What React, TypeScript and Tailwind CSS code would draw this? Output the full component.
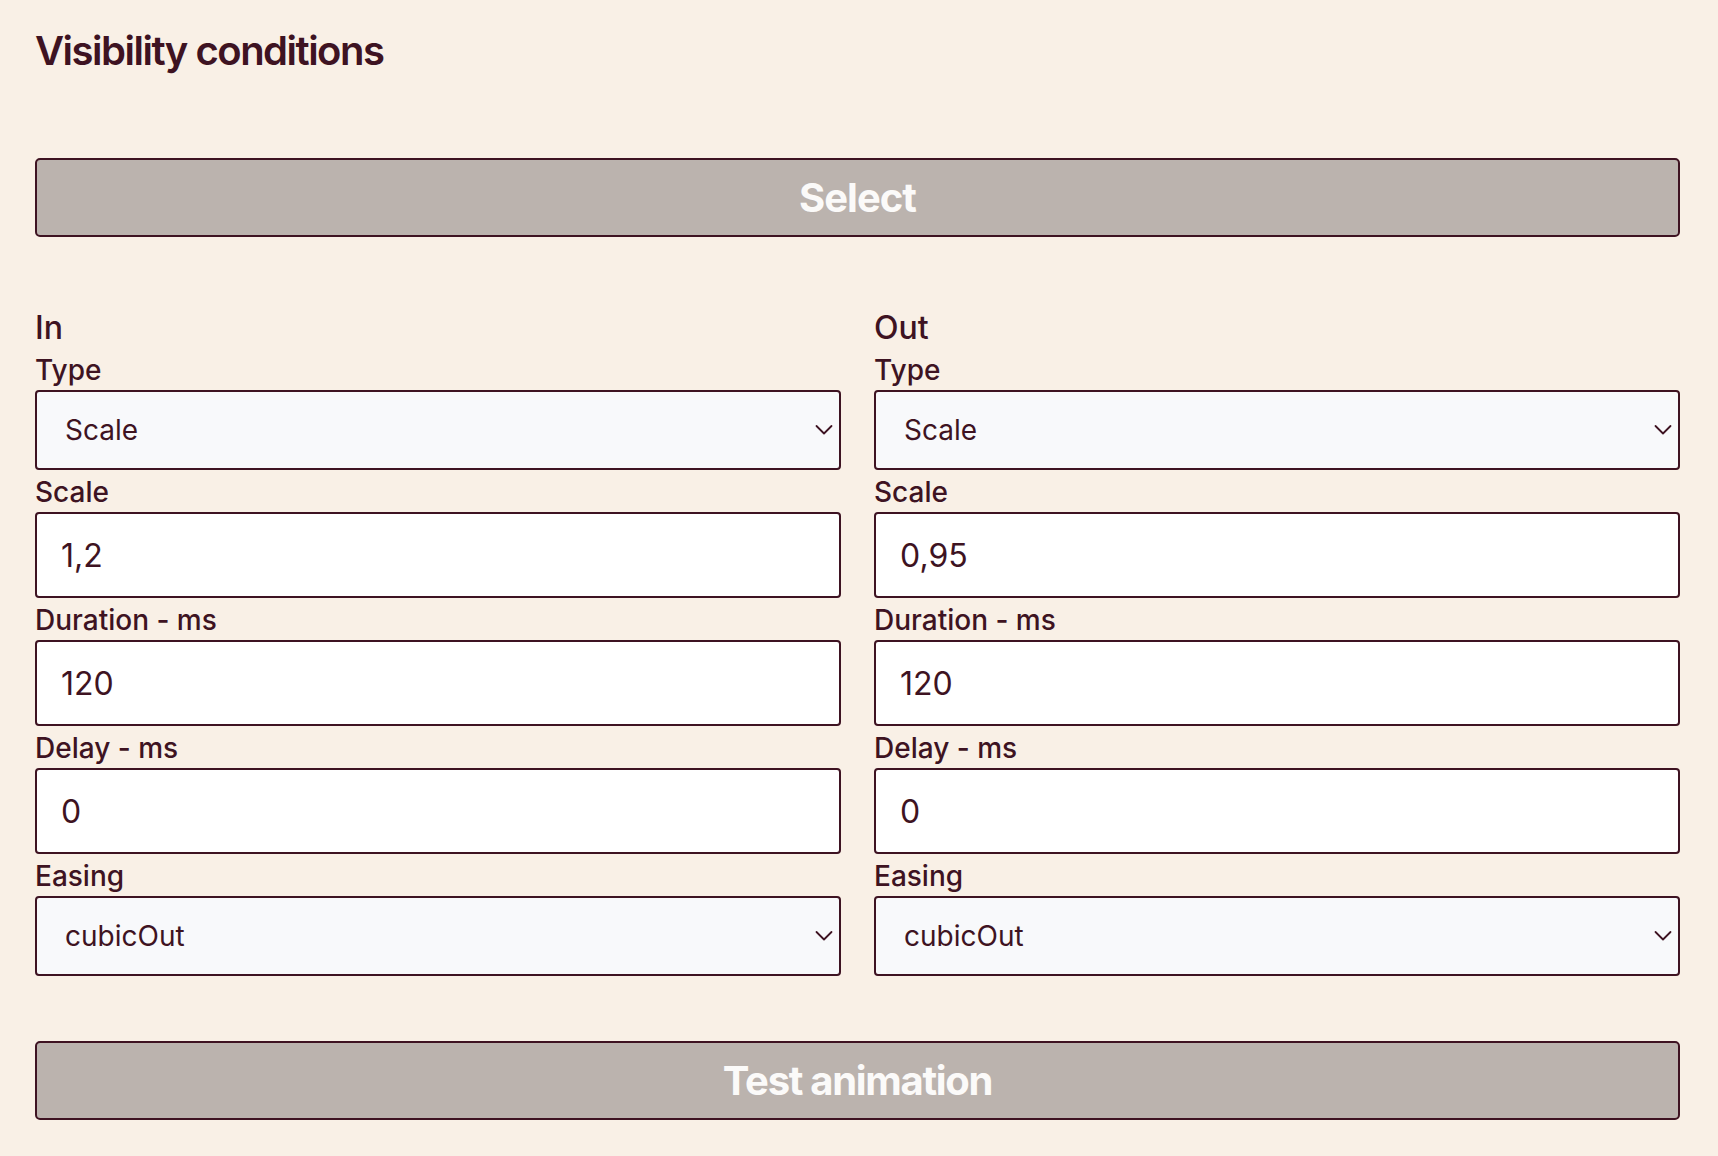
import React from "react";

const font = { fontFamily: "Inter, 'Noto Sans', sans-serif" };

function Chevron() {
  return (
    <svg
      className="pointer-events-none absolute right-[8px] top-1/2 -translate-y-1/2"
      width="18"
      height="11"
      viewBox="0 0 18 11"
      fill="none"
    >
      <path d="M1.5 1.5 L9 9 L16.5 1.5" stroke="#3e1322" strokeWidth="1.8" strokeLinecap="round" strokeLinejoin="round" />
    </svg>
  );
}

function Label({ children }: { children: React.ReactNode }) {
  return <div className="h-[42px] pt-[3px] text-[28px] leading-[39px] font-medium text-[#3e1322]">{children}</div>;
}

function SelectBox({ value }: { value: string }) {
  return (
    <div className="relative h-[80px] w-full">
      <select
        value={value}
        onChange={() => {}}
        className="h-full w-full appearance-none rounded-[4px] border-2 border-[#3e1322] bg-[#f8f9fb] pl-[28px] text-[28px] text-[#3e1322] outline-none"
        style={font}
      >
        <option value={value}>{value}</option>
      </select>
      <Chevron />
    </div>
  );
}

function TextBox({ value }: { value: string }) {
  return (
    <input
      value={value}
      readOnly
      className="block h-[86px] w-full rounded-[4px] border-2 border-[#3e1322] bg-white pl-[24px] text-[32px] text-[#3e1322] outline-none"
      style={font}
    />
  );
}

function Column({ title, scale }: { title: string; scale: string }) {
  return (
    <div className="flex flex-col">
      <div className="text-[32px] leading-[40px] font-medium text-[#3e1322]">{title}</div>
      <Label>Type</Label>
      <SelectBox value="Scale" />
      <Label>Scale</Label>
      <TextBox value={scale} />
      <Label>Duration - ms</Label>
      <TextBox value="120" />
      <Label>Delay - ms</Label>
      <TextBox value="0" />
      <Label>Easing</Label>
      <SelectBox value="cubicOut" />
    </div>
  );
}

export default function App() {
  return (
    <div className="min-h-screen w-full bg-[#f9f0e6] pl-[35px] pr-[38px] pt-[27px] pb-[37px]" style={font}>
      <h2 className="text-[40px] leading-[48px] font-semibold tracking-[-1.5px] text-[#3e1322]">Visibility conditions</h2>
      <button className="mt-[83px] block h-[79px] w-full rounded-[5px] border-2 border-[#3e1322] bg-[#bbb3ae] text-[40px] font-bold tracking-[-1px] text-[#fbfaf9]">
        Select
      </button>
      <div className="mt-[71px] grid grid-cols-2 gap-x-[33px]">
        <Column title="In" scale="1,2" />
        <Column title="Out" scale="0,95" />
      </div>
      <button className="mt-[65px] block h-[79px] w-full rounded-[5px] border-2 border-[#3e1322] bg-[#bbb3ae] text-[40px] font-bold tracking-[-1.3px] text-[#fbfaf9]">
        Test animation
      </button>
    </div>
  );
}
